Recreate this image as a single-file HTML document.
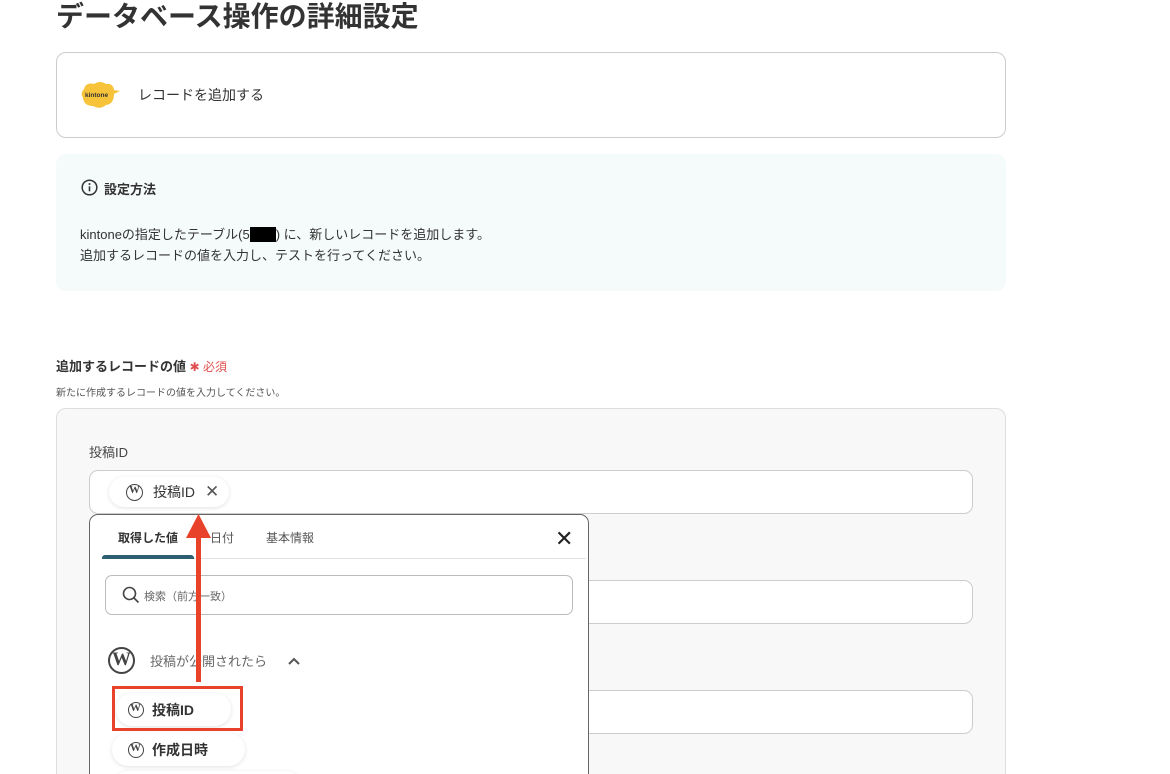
<!DOCTYPE html><html><head><meta charset="utf-8"><style>
*{box-sizing:border-box;margin:0;padding:0}
html,body{width:1170px;height:774px;overflow:hidden}
body{background:#fff;font-family:"Liberation Sans","Noto Sans CJK JP",sans-serif;color:#333;position:relative}
.a{position:absolute}
.wp{display:inline-block;border-radius:50%;background:#fff;border:1.5px solid #555;position:relative}
.chip{position:absolute;background:#fff;border-radius:17px;box-shadow:0 1px 4px rgba(0,0,0,.12);display:flex;align-items:center;font-size:14px;font-weight:bold;color:#333}
</style></head><body>
<div class="a" style="left:56px;top:-1px;font-size:28px;font-weight:bold;line-height:36px;color:#333">データベース操作の詳細設定</div>
<div class="a" style="left:56px;top:52px;width:950px;height:86px;border:1px solid #ccc;border-radius:10px"></div>
<svg class="a" style="left:80px;top:80px" width="40" height="30" viewBox="0 0 40 30"><path d="M4 9 Q6 2 14 4 Q20 0 26 4 Q33 3 34 10 L40 11 L34 14 Q34 24 26 25 Q20 30 13 26 Q4 26 3 18 Q0 13 4 9Z" fill="#f6c33a"/><text x="5" y="17" font-size="6.5" font-weight="bold" fill="#333" font-family="Liberation Sans">kintone</text></svg>
<div class="a" style="left:138px;top:85px;font-size:14px;color:#333">レコードを追加する</div>
<div class="a" style="left:56px;top:154px;width:950px;height:137px;background:#f5fafa;border-radius:10px"></div>
<svg class="a" style="left:81px;top:179px" width="17" height="17" viewBox="0 0 17 17"><circle cx="8.5" cy="8.5" r="7.3" fill="none" stroke="#333" stroke-width="1.5"/><rect x="7.7" y="7.3" width="1.6" height="5" fill="#333"/><circle cx="8.5" cy="5" r="1" fill="#333"/></svg>
<div class="a" style="left:104px;top:179px;font-size:13px;font-weight:bold">設定方法</div>
<div class="a" style="left:80px;top:224px;font-size:13px;line-height:21px">kintoneの指定したテーブル(5<span style="background:#000;color:#000">xxxx</span>) に、新しいレコードを追加します。<br>追加するレコードの値を入力し、テストを行ってください。</div>
<div class="a" style="left:56px;top:356px;font-size:13px;font-weight:bold">追加するレコードの値 <span style="color:#e05050;font-weight:normal;font-size:12px">✱ 必須</span></div>
<div class="a" style="left:56px;top:384px;font-size:10px;color:#555">新たに作成するレコードの値を入力してください。</div>
<div class="a" style="left:56px;top:408px;width:950px;height:420px;background:#f8f8f8;border:1px solid #ddd;border-radius:10px"></div>
<div class="a" style="left:89px;top:442px;font-size:13px;color:#444">投稿ID</div>
<div class="a" style="left:89px;top:470px;width:884px;height:44px;background:#fff;border:1px solid #ccc;border-radius:9px"></div>
<div class="a" style="left:89px;top:580px;width:884px;height:44px;background:#fff;border:1px solid #ccc;border-radius:9px"></div>
<div class="a" style="left:89px;top:690px;width:884px;height:44px;background:#fff;border:1px solid #ccc;border-radius:9px"></div>
<div class="chip" style="left:109px;top:477px;width:120px;height:30px;font-weight:normal;padding-left:17px"><span class="wp" style="width:17px;height:17px;border-color:#444"><b style="position:absolute;left:2px;top:-1px;font-size:11px;font-family:'Liberation Serif';color:#444">W</b></span><span style="margin-left:10px">投稿ID</span><span style="margin-left:10px;font-size:17px;color:#555">✕</span></div>
<div class="a" style="left:89px;top:514px;width:500px;height:320px;background:#fff;border:1px solid #666;border-radius:9px"></div>
<div class="a" style="left:118px;top:529px;font-size:12px;font-weight:bold">取得した値</div>
<div class="a" style="left:210px;top:529px;font-size:12px;color:#555">日付</div>
<div class="a" style="left:266px;top:529px;font-size:12px;color:#555">基本情報</div>
<div class="a" style="left:555px;top:529px;font-size:22px;line-height:20px;color:#222">✕</div>
<div class="a" style="left:102px;top:558px;width:484px;height:1px;background:#e3e3e3"></div>
<div class="a" style="left:102px;top:555px;width:92px;height:4px;background:#2d5f73;border-radius:3px 3px 0 0"></div>
<div class="a" style="left:105px;top:575px;width:468px;height:40px;border:1px solid #bbb;border-radius:7px"></div>
<svg class="a" style="left:122px;top:586px" width="18" height="18" viewBox="0 0 18 18"><circle cx="7.5" cy="7.5" r="6" fill="none" stroke="#444" stroke-width="1.6"/><line x1="12" y1="12" x2="16.5" y2="16.5" stroke="#444" stroke-width="1.6"/></svg>
<div class="a" style="left:144px;top:588px;font-size:11px;color:#666">検索（前方一致）</div>
<span class="wp a" style="left:108px;top:647px;width:27px;height:27px;border-width:2px;border-color:#444"><b style="position:absolute;left:2px;top:0px;font-size:19px;font-family:'Liberation Serif';color:#444">W</b></span>
<div class="a" style="left:150px;top:651px;font-size:13px;color:#666">投稿が公開されたら</div>
<svg class="a" style="left:287px;top:656px" width="14" height="10" viewBox="0 0 14 10"><path d="M2 8 L7 3 L12 8" fill="none" stroke="#555" stroke-width="2"/></svg>
<div class="chip" style="left:116px;top:693px;width:115px;height:33px;padding-left:12px"><span class="wp" style="width:16px;height:16px;border-color:#444"><b style="position:absolute;left:1px;top:-1px;font-size:11px;font-family:'Liberation Serif';color:#444">W</b></span><span style="margin-left:8px">投稿ID</span></div>
<div class="chip" style="left:112px;top:733px;width:133px;height:33px;padding-left:16px"><span class="wp" style="width:16px;height:16px;border-color:#444"><b style="position:absolute;left:1px;top:-1px;font-size:11px;font-family:'Liberation Serif';color:#444">W</b></span><span style="margin-left:8px">作成日時</span></div>
<div class="chip" style="left:112px;top:771px;width:190px;height:33px"></div>
<div class="a" style="left:112px;top:686px;width:131px;height:45px;border:3.5px solid #e8432a"></div>
<svg class="a" style="left:180px;top:512px" width="40" height="172" viewBox="0 0 40 172"><rect x="16" y="20" width="5" height="150" fill="#e8432a"/><path d="M18.5 2 L31 26 L6 26Z" fill="#e8432a"/></svg>
</body></html>
